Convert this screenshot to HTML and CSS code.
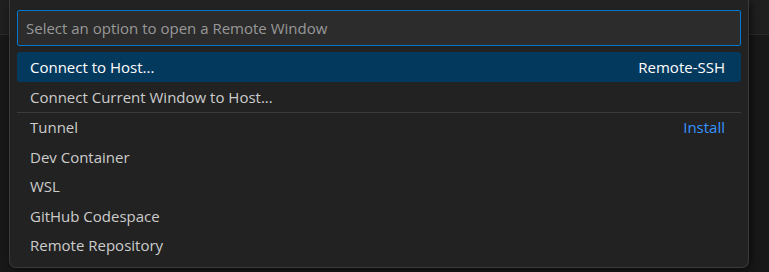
FILE: index.html
```html
<!DOCTYPE html>
<html lang="en">
<head>
    <meta charset="UTF-8">
    <meta name="viewport" content="width=device-width, initial-scale=1.0">
    <title>Remote Window</title>
    <link rel="stylesheet" href="styles.css">
</head>
<body>

    <div class="titlebar"></div>
    <div class="workbench"></div>

    <div class="quick-pick">
        <div class="quick-input">
            <input type="text" placeholder="Select an option to open a Remote Window">
        </div>
        <ul class="pick-list">
            <li class="pick-item selected">
                <span class="label">Connect to Host...</span>
                <span class="detail">Remote-SSH</span>
            </li>
            <li class="pick-item">
                <span class="label">Connect Current Window to Host...</span>
            </li>
            <li class="separator"></li>
            <li class="pick-item">
                <span class="label">Tunnel</span>
                <span class="detail link">Install</span>
            </li>
            <li class="pick-item"><span class="label">Dev Container</span></li>
            <li class="pick-item"><span class="label">WSL</span></li>
            <li class="pick-item"><span class="label">GitHub Codespace</span></li>
            <li class="pick-item"><span class="label">Remote Repository</span></li>
        </ul>
    </div>

</body>
</html>
```

FILE: styles.css
```css
* {
    box-sizing: border-box;
}
body {
    margin: 0;
    height: 272px;
    overflow: hidden;
    background-color: #181818;
    font-family: "Open Sans", "Noto Sans", sans-serif;
    position: relative;
}
.titlebar {
    height: 35px;
    background-color: #1f1f1f;
    border-bottom: 1px solid #2b2b2b;
}
.workbench {
    height: 237px;
    background-color: #181818;
}

/* quick pick floats over the workbench */
.quick-pick {
    position: absolute;
    left: 9px;
    top: 0;
    width: 740px;
    height: 268px;
    background-color: #222222;
    border: 1px solid #3a3a3a;
    border-top: none;
    border-radius: 0 0 7px 7px;
    box-shadow: 2px 2px 8px rgba(0, 0, 0, 0.6);
    padding: 10px 7px 0 7px;
}
.quick-input input {
    display: block;
    width: 100%;
    height: 36px;
    padding: 0 8px;
    background-color: #2c2c2c;
    border: 1px solid #0078d4;
    border-radius: 2px;
    color: #cccccc;
    font-family: inherit;
    font-size: 15px;
    outline: none;
}
.quick-input input::placeholder {
    color: #989898;
}
.pick-list {
    list-style: none;
    margin: 6px 0 0 0;
    padding: 0;
}
.pick-item {
    height: 29.5px;
    display: flex;
    align-items: center;
    justify-content: space-between;
    padding: 0 16px 0 13px;
    font-size: 15px;
    color: #cccccc;
    border-radius: 3px;
}
.pick-item.selected {
    height: 30px;
    background-color: #04395e;
    color: #ffffff;
}
.separator {
    height: 1px;
    background-color: #3b3b3b;
    margin: 0;
}
.detail {
    color: #cccccc;
}
.selected .detail {
    color: #ffffff;
}
.detail.link {
    color: #3794ff;
}
```
